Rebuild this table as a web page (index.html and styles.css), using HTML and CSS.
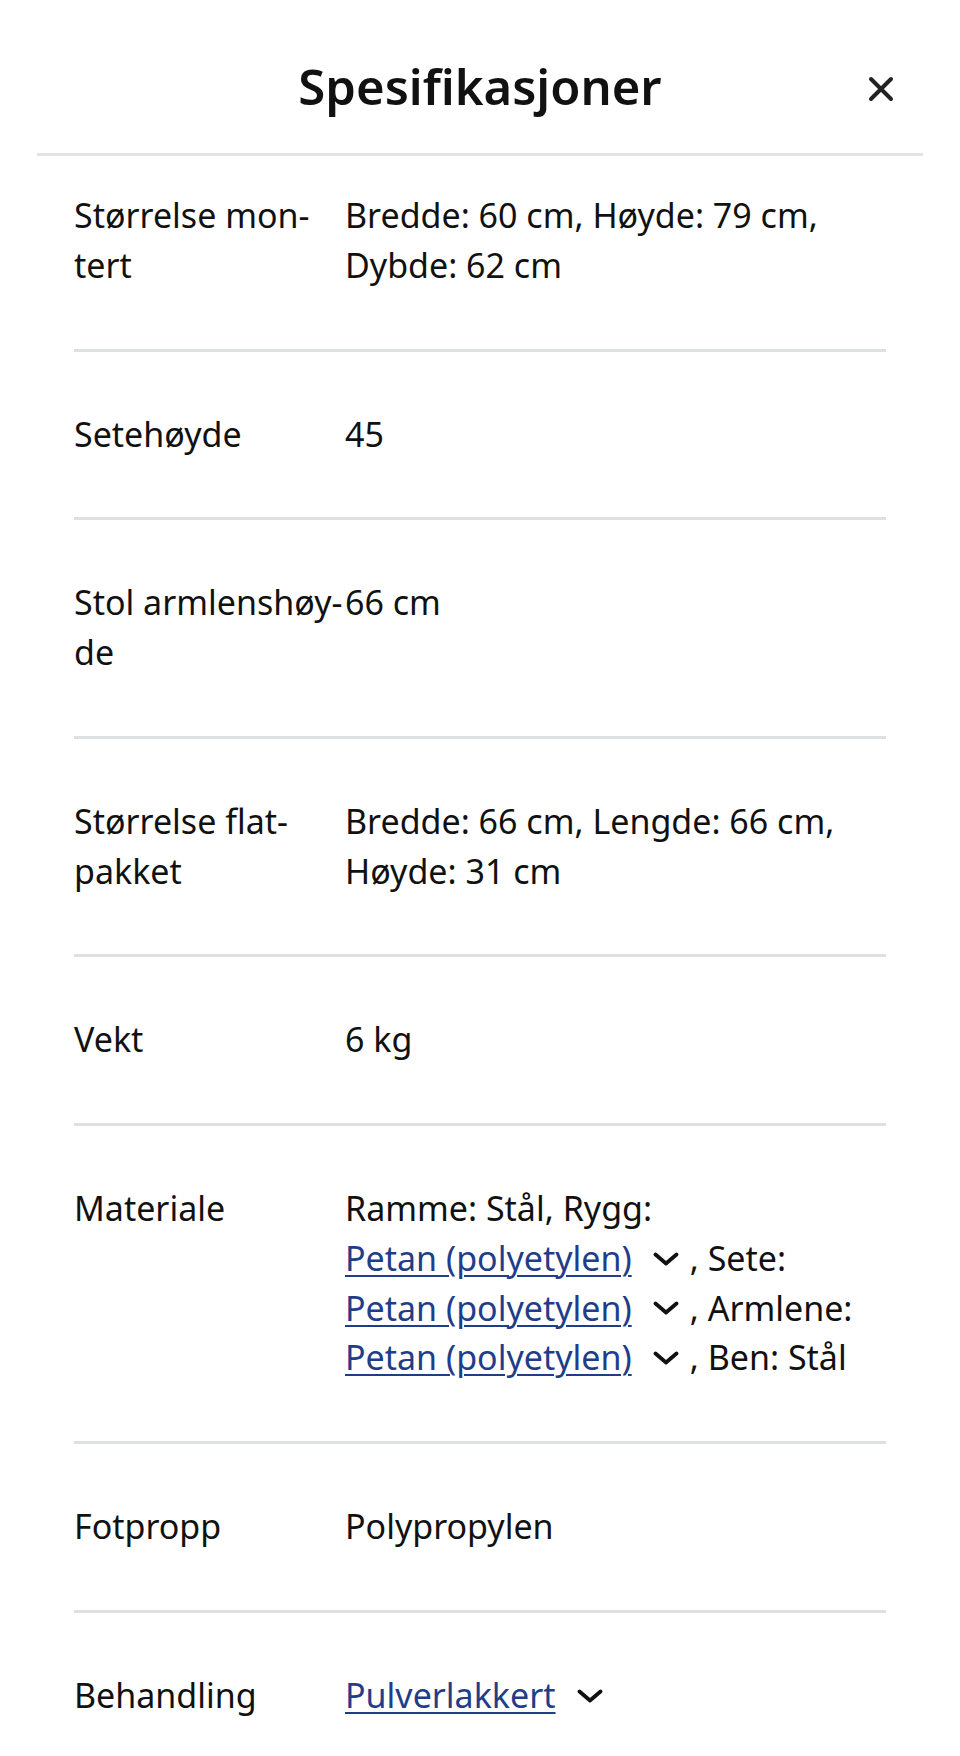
FILE: index.html
```html
<!DOCTYPE html>
<html lang="nb">
<head>
<meta charset="utf-8">
<title>Spesifikasjoner</title>
<link rel="stylesheet" href="styles.css">
</head>
<body>
<div class="sheet">
  <header class="sheet-header">
    <span></span>
    <h1 class="sheet-title">Spesifikasjoner</h1>
    <button class="close-btn" aria-label="Lukk">
      <svg viewBox="0 0 26 26" width="26" height="26" aria-hidden="true"><path d="M3 3 L23 23 M23 3 L3 23" fill="none" stroke="#222" stroke-width="4" stroke-linecap="round"/></svg>
    </button>
  </header>
  <dl class="specs">
    <div class="spec-row first">
      <dt class="spec-label">Størrelse mon&shy;tert</dt>
      <dd class="spec-value">Bredde: 60 cm, Høyde: 79 cm, Dybde: 62 cm</dd>
    </div>
    <div class="spec-row">
      <dt class="spec-label">Setehøyde</dt>
      <dd class="spec-value">45</dd>
    </div>
    <div class="spec-row">
      <dt class="spec-label">Stol armlenshøy&shy;de</dt>
      <dd class="spec-value">66 cm</dd>
    </div>
    <div class="spec-row">
      <dt class="spec-label">Størrelse flat&shy;pakket</dt>
      <dd class="spec-value">Bredde: 66 cm, Lengde: 66 cm, Høyde: 31 cm</dd>
    </div>
    <div class="spec-row">
      <dt class="spec-label">Vekt</dt>
      <dd class="spec-value">6 kg</dd>
    </div>
    <div class="spec-row">
      <dt class="spec-label">Materiale</dt>
      <dd class="spec-value">Ramme: Stål, Rygg: <span class="nw"><a class="mat-link" href="#">Petan (polyetylen)</a><span class="chev"><svg viewBox="0 0 26 14" width="26" height="14" aria-hidden="true"><path d="M2.5 2.5 L13 11.5 L23.5 2.5" fill="none" stroke="#111" stroke-width="3.8" stroke-linecap="round" stroke-linejoin="round"/></svg></span>,</span> Sete: <span class="nw"><a class="mat-link" href="#">Petan (polyetylen)</a><span class="chev"><svg viewBox="0 0 26 14" width="26" height="14" aria-hidden="true"><path d="M2.5 2.5 L13 11.5 L23.5 2.5" fill="none" stroke="#111" stroke-width="3.8" stroke-linecap="round" stroke-linejoin="round"/></svg></span>,</span> Armlene: <span class="nw"><a class="mat-link" href="#">Petan (polyetylen)</a><span class="chev"><svg viewBox="0 0 26 14" width="26" height="14" aria-hidden="true"><path d="M2.5 2.5 L13 11.5 L23.5 2.5" fill="none" stroke="#111" stroke-width="3.8" stroke-linecap="round" stroke-linejoin="round"/></svg></span>,</span> Ben: Stål</dd>
    </div>
    <div class="spec-row">
      <dt class="spec-label">Fotpropp</dt>
      <dd class="spec-value">Polypropylen</dd>
    </div>
    <div class="spec-row last">
      <dt class="spec-label">Behandling</dt>
      <dd class="spec-value"><span class="nw"><a class="mat-link" href="#">Pulverlakkert</a><span class="chev"><svg viewBox="0 0 26 14" width="26" height="14" aria-hidden="true"><path d="M2.5 2.5 L13 11.5 L23.5 2.5" fill="none" stroke="#111" stroke-width="3.8" stroke-linecap="round" stroke-linejoin="round"/></svg></span></span></dd>
    </div>
  </dl>
</div>
</body>
</html>
```
FILE: styles.css
```css
html, body {
  margin: 0;
  padding: 0;
  background: #ffffff;
}

body {
  font-family: "Noto Sans", "Open Sans", sans-serif;
  color: #111111;
  height: 1756px;
  overflow: hidden;
}

.sheet-header {
  display: grid;
  grid-template-columns: 1fr auto 1fr;
  align-items: center;
  height: 135px;
  padding-top: 18px;
  margin: 0 37px;
  border-bottom: 3px solid #e4e4e6;
}

.sheet-title {
  margin: 0;
  font-size: 49px;
  font-weight: 600;
  line-height: 1.2;
  color: #111111;
  padding-top: 2px;
}

.close-btn {
  justify-self: end;
  width: 48px;
  height: 48px;
  margin-right: 18px;
  margin-top: 6px;
  padding: 0;
  border: 0;
  background: transparent;
  display: flex;
  align-items: center;
  justify-content: center;
}

.specs {
  margin: 0;
  padding: 0 74px;
}

.spec-row {
  display: grid;
  grid-template-columns: 271px 1fr;
  padding: 58px 0;
  border-bottom: 3px solid #dfe0e4;
  font-size: 34px;
  line-height: 49.75px;
}

.spec-row.first {
  padding-top: 35px;
}

.spec-row.last {
  border-bottom: 0;
}

.spec-label {
  margin: 0;
  hyphens: manual;
}

.spec-value {
  margin: 0;
}

.nw {
  white-space: nowrap;
}

.mat-link {
  color: #1f3d88;
  text-decoration: underline;
  text-decoration-thickness: 2px;
  text-underline-offset: 4px;
}

.chev {
  display: inline-block;
  width: 26px;
  height: 14px;
  margin: 0 11px 0 21px;
  vertical-align: middle;
  position: relative;
  top: -3px;
}

.chev svg {
  display: block;
}
```
